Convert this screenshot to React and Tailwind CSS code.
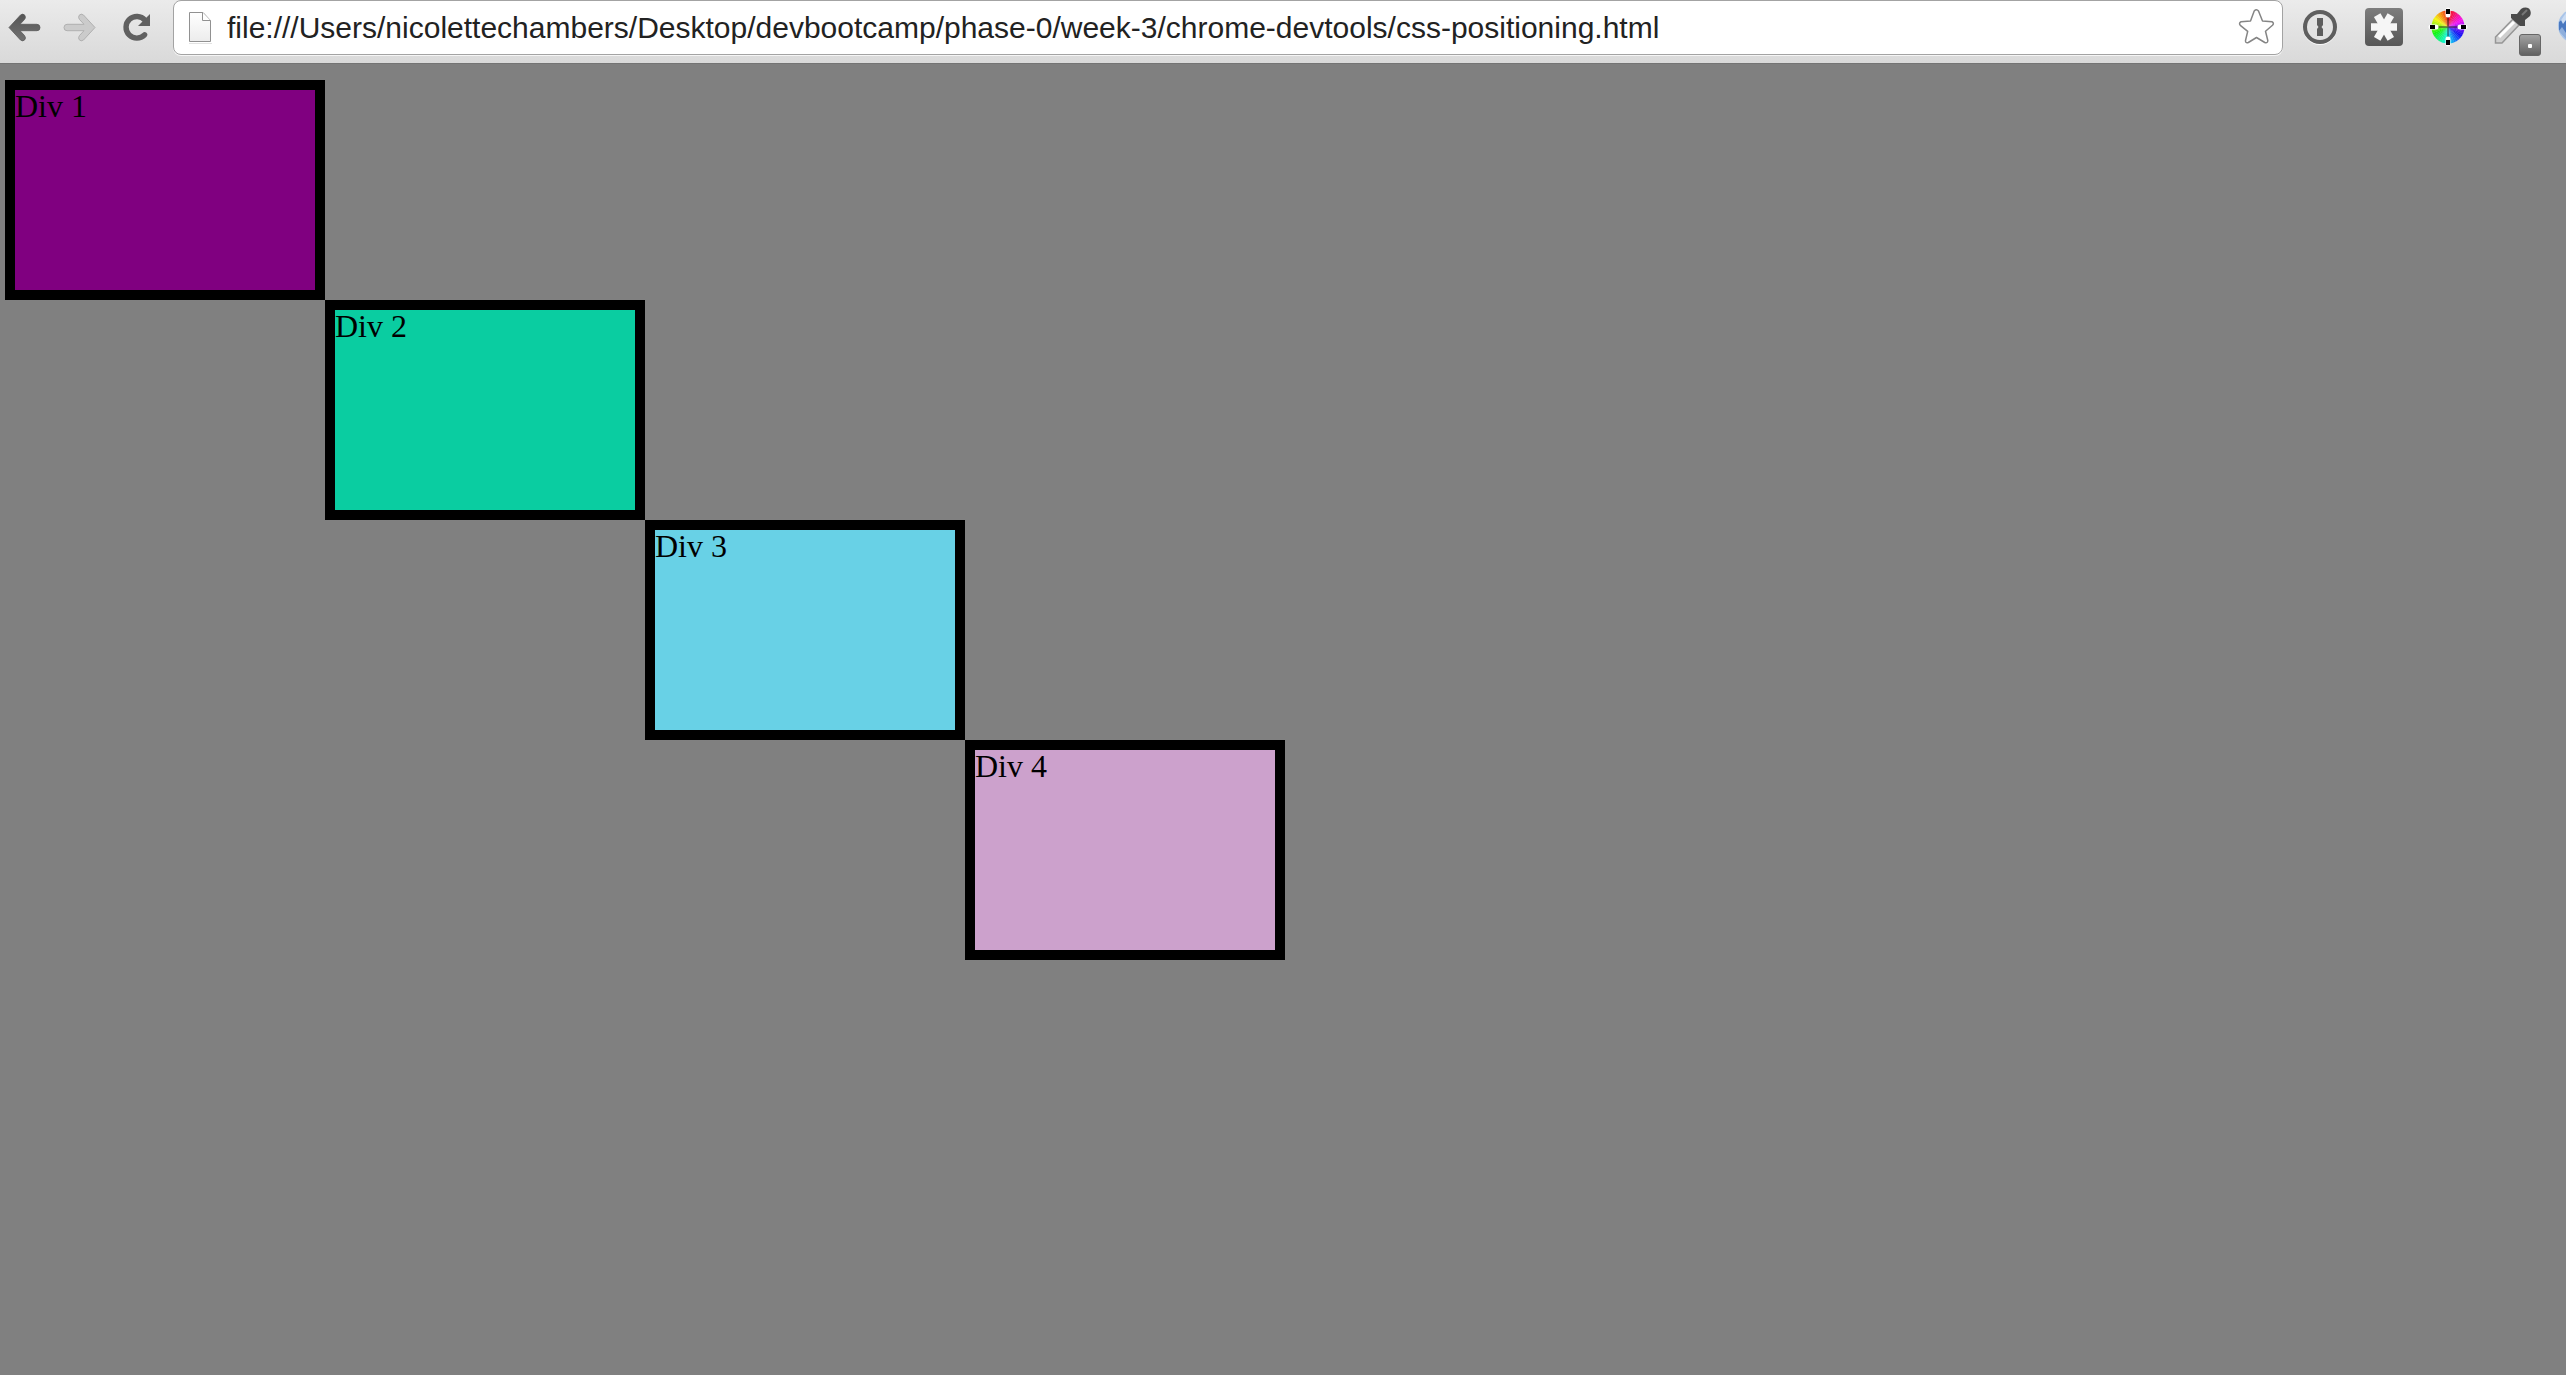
import React from "react";

const URL_TEXT =
  "file:///Users/nicolettechambers/Desktop/devbootcamp/phase-0/week-3/chrome-devtools/css-positioning.html";

const ARROW = "M9 27.500 L20.500 15 Q23 13 25 15.500 Q26 17.500 24.500 19.500 L20 24.300 H37 Q40 24.500 40 27.500 Q40 30.700 37 30.700 H20 L24.500 35.500 Q26 37.500 25 39.500 Q23 42 20.500 40 Z";

const SLICES = Array.from({ length: 48 }, (_, i) => i);

function slice(i) {
  const a = ((i * 7.5 - 90) * Math.PI) / 180;
  const b = ((i * 7.5 - 81.5) * Math.PI) / 180;
  const r = 16.5;
  return `M32 27 L${32 + r * Math.cos(a)} ${27 + r * Math.sin(a)} A${r} ${r} 0 0 1 ${32 + r * Math.cos(b)} ${27 + r * Math.sin(b)} Z`;
}

function BackIcon() {
  return (
    <svg className="h-[63px] w-[52px]" viewBox="0 0 52 63" aria-hidden="true">
      <defs>
        <linearGradient id="dark" x1="0" y1="0" x2="0" y2="1">
          <stop offset="0" stopColor="#555" />
          <stop offset="1" stopColor="#727272" />
        </linearGradient>
      </defs>
      <path d={ARROW} fill="url(#dark)" stroke="#5a5a5a" strokeWidth="0.800" />
    </svg>
  );
}

function ForwardIcon() {
  return (
    <svg className="h-[63px] w-[58px]" viewBox="0 0 58 63" aria-hidden="true">
      <g transform="translate(52 0) scale(-1 1)">
        <path d={ARROW} fill="#cbcbcb" stroke="#b0b0b0" strokeWidth="1" />
      </g>
    </svg>
  );
}

function ReloadIcon() {
  return (
    <svg className="h-[63px] w-[63px]" viewBox="0 0 63 63" aria-hidden="true">
      <path d="M35 20.200 A10.800 10.800 0 1 0 34.600 34.800" fill="none" stroke="#606060" strokeWidth="5.400" strokeLinecap="round" />
      <path d="M40 14 V26 H28 Z" fill="#606060" />
    </svg>
  );
}

function PageIcon() {
  return (
    <svg className="h-[53px] w-[53px] shrink-0" viewBox="0 0 53 53" aria-hidden="true">
      <defs>
        <linearGradient id="paper" x1="0" y1="0" x2="0" y2="1">
          <stop offset="0" stopColor="#fff" />
          <stop offset="1" stopColor="#ececec" />
        </linearGradient>
      </defs>
      <path d="M15 42.500 H38" stroke="#e2e2e2" />
      <path d="M15.500 11.500 H29 L36.500 19.500 V40.500 H15.500 Z" fill="url(#paper)" stroke="#919191" />
      <path d="M28.500 11.500 V19.500 H36.500" fill="#fff" stroke="#919191" />
    </svg>
  );
}

function StarIcon() {
  return (
    <svg className="h-[53px] w-[54px]" viewBox="0 0 54 53" aria-hidden="true">
      <path d="M26.200 10 Q28.500 7.500 30.500 10 L34.500 20 L44 20.800 Q46.500 22 44.500 24.300 L37.500 30.300 L39.800 39.500 Q39.800 42.500 36.800 41.500 L28.500 36.500 L20.300 41.500 Q17.300 42.500 17.500 39.500 L19.700 30.300 L12.300 24.300 Q10.500 22 13 20.800 L22.500 20 Z" fill="#fff" stroke="#858585" strokeWidth="1.500" strokeLinejoin="round" />
    </svg>
  );
}

function KeyholeIcon() {
  return (
    <svg className="h-[63px] w-[68px]" viewBox="0 0 68 63" aria-hidden="true">
      <circle cx="37" cy="28" r="17" fill="#fafafa" />
      <circle cx="37" cy="27" r="15" fill="#e3e3e3" stroke="#5e5e5e" strokeWidth="4" />
      <path d="M34 18 H40 V25 L38.500 27 L40 29 V36 H34 V29 L35.500 27 L34 25 Z" fill="#5e5e5e" />
    </svg>
  );
}

function AsteriskIcon() {
  return (
    <svg className="h-[63px] w-[65px]" viewBox="0 0 65 63" aria-hidden="true">
      <defs>
        <linearGradient id="tile" x1="0" y1="0" x2="0" y2="1">
          <stop offset="0" stopColor="#7d7d7d" />
          <stop offset="1" stopColor="#575757" />
        </linearGradient>
      </defs>
      <rect x="14" y="8" width="38" height="38" rx="4" fill="url(#tile)" />
      <g stroke="#f6f6f6" strokeWidth="7.500">
        <path d="M20 27 H46" />
        <path d="M26.200 15.200 L39.800 38.800" />
        <path d="M39.800 15.200 L26.200 38.800" />
      </g>
    </svg>
  );
}

function WheelIcon() {
  return (
    <svg className="h-[63px] w-16" viewBox="0 0 64 63" aria-hidden="true">
      {SLICES.map((i) => (
        <path key={i} d={slice(i)} fill={`hsl(${(360 - i * 7.5) % 360} 92% 52%)`} />
      ))}
      <path d="M32 15 V39 M20 27 H44" stroke="#222" strokeWidth="1.500" opacity="0.600" />
      <path d="M32 10 V15 M32 39 V44 M15 27 H20 M44 27 H49" stroke="#fff" strokeWidth="5" strokeLinecap="round" />
      <path d="M32 9 V14 M32 40 V45 M14 27 H19 M45 27 H50" stroke="#000" strokeWidth="4" />
    </svg>
  );
}

function DropperIcon() {
  return (
    <svg className="h-[63px] w-[68px]" viewBox="0 0 68 63" aria-hidden="true">
      <defs>
        <linearGradient id="badge" x1="0" y1="0" x2="0" y2="1">
          <stop offset="0" stopColor="#a4a4a4" />
          <stop offset="1" stopColor="#606060" />
        </linearGradient>
      </defs>
      <path d="M15.500 43 V37 L33 19 L39 25 L22 43 Z" fill="#cfcfcf" stroke="#969696" strokeWidth="1.500" />
      <path d="M19 37 L34 22" stroke="#fff" strokeWidth="3" />
      <path d="M31 14 H37 L41 9 Q45 6.500 49 8.500 Q52 12 50 16 L45 20 V26 H40 L31 18 Z" fill="#4b4b4b" />
      <path d="M42 15 L47 10" stroke="#777" strokeWidth="2" />
      <rect x="39.500" y="34.500" width="21" height="21" rx="2.500" fill="url(#badge)" stroke="#666" />
      <rect x="48" y="44" width="4" height="4" rx="1" fill="#fff" />
    </svg>
  );
}

function GlobeIcon() {
  return (
    <svg className="h-[63px] w-[18px]" viewBox="0 0 18 63" aria-hidden="true">
      <circle cx="27" cy="26" r="17" fill="#a9c4e8" />
      <path d="M11 22 L18 16 V38 L11 30 Z" fill="#4a78c0" />
      <path d="M11 31 L14 27 L18 33 V39 Z" fill="#8fafdc" />
      <path d="M13 20 L18 13 V20 L15 24 Z" fill="#c9dbf2" />
    </svg>
  );
}

const BOXES = [
  { name: "Div 1", cell: "col-start-1 row-start-1 bg-[#800080]" },
  { name: "Div 2", cell: "col-start-2 row-start-2 bg-[#0acda1]" },
  { name: "Div 3", cell: "col-start-3 row-start-3 bg-[#68d1e6]" },
  { name: "Div 4", cell: "col-start-4 row-start-4 bg-[#cca1cc]" },
];

export default function App() {
  return (
    <div className="flex min-h-screen flex-col overflow-x-hidden bg-[#808080]">
      <header className="flex items-start border-b border-[#747474] bg-linear-to-b from-[#ebebeb] to-[#d9d9d9]">
        <button type="button" aria-label="Back"><BackIcon /></button>
        <button type="button" aria-label="Forward" disabled><ForwardIcon /></button>
        <button type="button" aria-label="Reload"><ReloadIcon /></button>
        <div className="flex min-w-0 flex-1 items-center rounded-lg border border-[#a3a3a3] bg-white shadow-[0_1px_0_#f5f5f5]">
          <PageIcon />
          <input
            type="text"
            aria-label="Address"
            defaultValue={URL_TEXT}
            className="h-[53px] min-w-0 flex-1 bg-transparent font-['Liberation_Sans',sans-serif] text-[30px] leading-9 text-[#222] outline-none"
          />
          <button type="button" aria-label="Bookmark this page"><StarIcon /></button>
        </div>
        <button type="button" aria-label="Passwords"><KeyholeIcon /></button>
        <button type="button" aria-label="LastPass"><AsteriskIcon /></button>
        <button type="button" aria-label="Color wheel"><WheelIcon /></button>
        <button type="button" aria-label="Eyedropper"><DropperIcon /></button>
        <button type="button" aria-label="Globe"><GlobeIcon /></button>
      </header>
      <main className="grid grid-cols-[repeat(4,320px)] auto-rows-[220px] px-[5px] pt-4 font-['Liberation_Serif',serif] text-[32px] leading-8 text-black">
        {BOXES.map((b) => (
          <div key={b.name} className={`border-10 border-black ${b.cell}`}>{b.name}</div>
        ))}
      </main>
    </div>
  );
}
